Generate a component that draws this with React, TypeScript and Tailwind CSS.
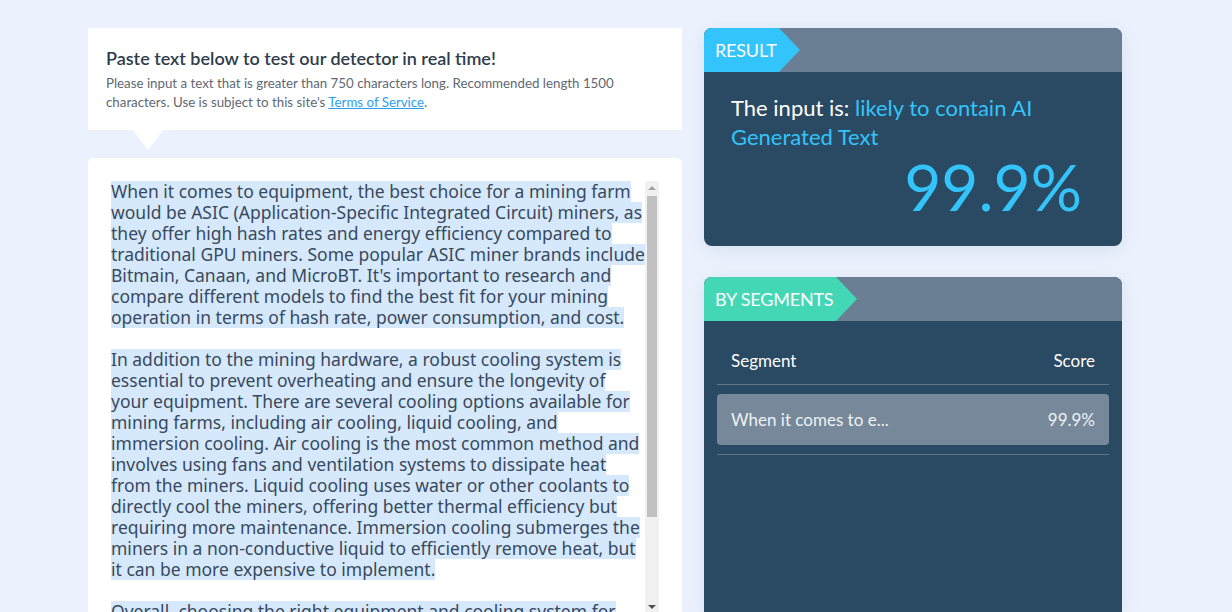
const ui = { fontFamily: 'Lato, "Open Sans", sans-serif' };
const mono = { fontFamily: '"Noto Sans", "Open Sans", sans-serif' };

const paragraphs = [
  [
    'When it comes to equipment, the best choice for a mining farm',
    'would be ASIC (Application-Specific Integrated Circuit) miners, as',
    'they offer high hash rates and energy efficiency compared to',
    'traditional GPU miners. Some popular ASIC miner brands include',
    "Bitmain, Canaan, and MicroBT. It's important to research and",
    'compare different models to find the best fit for your mining',
    'operation in terms of hash rate, power consumption, and cost.',
  ],
  [
    'In addition to the mining hardware, a robust cooling system is',
    'essential to prevent overheating and ensure the longevity of',
    'your equipment. There are several cooling options available for',
    'mining farms, including air cooling, liquid cooling, and',
    'immersion cooling. Air cooling is the most common method and',
    'involves using fans and ventilation systems to dissipate heat',
    'from the miners. Liquid cooling uses water or other coolants to',
    'directly cool the miners, offering better thermal efficiency but',
    'requiring more maintenance. Immersion cooling submerges the',
    'miners in a non-conductive liquid to efficiently remove heat, but',
    'it can be more expensive to implement.',
  ],
  ['Overall, choosing the right equipment and cooling system for'],
];

function TagHeader({ label, color, width }: { label: string; color: string; width: string }) {
  return (
    <div className="flex h-[44px] bg-[#6a7f93]">
      <div className={`flex h-full items-center pl-[11px] ${color} ${width}`} style={{ clipPath: 'polygon(0 0, calc(100% - 21px) 0, 100% 50%, calc(100% - 21px) 100%, 0 100%)' }}>
        <span className="text-[18px] tracking-[-0.2px] text-white">{label}</span>
      </div>
    </div>
  );
}

export default function App() {
  return (
    <div className="flex h-[612px] gap-[22px] overflow-hidden bg-[#ecf2fd] pl-[88px] pt-[28px]" style={ui}>
      <div className="flex min-h-0 w-[594px] flex-col">
        <div className="relative bg-white px-[18px] pb-[18px] pt-[18px]">
          <h2 className="text-[18px] font-semibold leading-[24px] text-[#2e3c4b]">
            Paste text below to test our detector in real time!
          </h2>
          <p className="mt-[4px] text-[13.3px] leading-[19px] text-[#5e6873]">
            Please input a text that is greater than 750 characters long. Recommended length 1500
            <br />
            characters. Use is subject to this site's <span className="text-[#2d9ff0] underline">Terms of Service</span>.
          </p>
          <div
            className="absolute left-[45px] top-full h-[20px] w-[30px] bg-white"
            style={{ clipPath: 'polygon(0 0, 100% 0, 50% 100%)' }}
          />
        </div>

        <div className="mt-[28px] flex min-h-0 flex-1 overflow-hidden rounded-t-[5px] bg-white pl-[23px] pt-[23px]">
          <div className="w-[534px] overflow-hidden text-[17.5px] leading-[21px] text-[#38495e]" style={mono}>
            {paragraphs.map((lines, i) => (
              <div key={i} className="mb-[21px]">
                {lines.map((l) => (
                  <div key={l} className="h-[21px] w-fit whitespace-nowrap bg-[#d6e8fb]">
                    {l}
                  </div>
                ))}
              </div>
            ))}
          </div>
          <div className="flex w-[14px] shrink-0 flex-col items-center bg-[#f1f1f1]">
            <div className="mt-[5px] h-0 w-0 border-x-[4px] border-b-[4px] border-x-transparent border-b-[#a3a3a3]" />
            <div className="mt-[6px] h-[321px] w-[10px] bg-[#c1c1c1]" />
            <div className="mt-auto mb-[3px] h-0 w-0 border-x-[4px] border-t-[4px] border-x-transparent border-t-[#505050]" />
          </div>
        </div>
      </div>

      <div className="flex w-[418px] flex-col gap-[31px]">
        <div className="overflow-hidden rounded-[8px] bg-[#2a4962] shadow-[0_4px_18px_rgba(60,90,160,0.12)]">
          <TagHeader label="RESULT" color="bg-[#33c4fb]" width="w-[96px]" />
          <div className="px-[27px] pb-[23px] pt-[21px]">
            <p className="text-[22px] leading-[29px] text-white">
              The input is: <span className="text-[#33c4fb]">likely to contain AI Generated Text</span>
            </p>
            <p className="pr-[13px] text-right text-[64px] leading-[72px] text-[#33c4fb]">99.9%</p>
          </div>
        </div>

        <div className="flex-1 overflow-hidden rounded-t-[8px] bg-[#2a4962] shadow-[0_4px_18px_rgba(60,90,160,0.12)]">
          <TagHeader label="BY SEGMENTS" color="bg-[#44d7b6]" width="w-[153px]" />
          <div className="px-[13px] pt-[16px]">
            <div className="flex h-[48px] items-center justify-between border-b border-[#5d7589] px-[14px] text-[17px] text-white">
              <span>Segment</span>
              <span>Score</span>
            </div>
            <div className="border-b border-[#5d7589] py-[9px]">
              <div className="flex h-[51px] items-center justify-between rounded-[4px] bg-[#76889a] px-[14px] text-[17px] text-[#eef2f5]">
                <span>When it comes to e...</span>
                <span>99.9%</span>
              </div>
            </div>
          </div>
        </div>
      </div>
    </div>
  );
}
